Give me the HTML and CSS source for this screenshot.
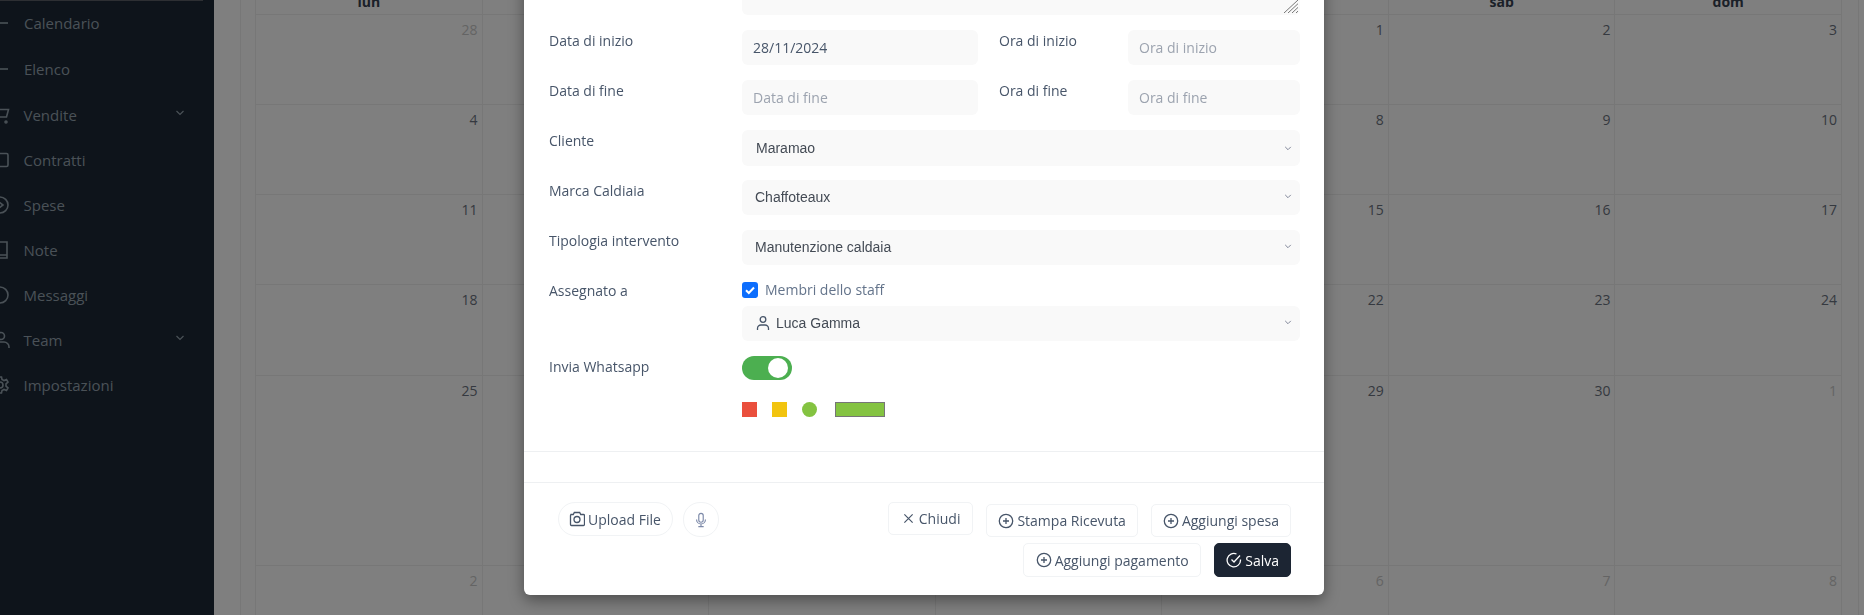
FILE: index.html
```html
<!DOCTYPE html>
<html lang="it">
<head>
<meta charset="utf-8">
<title>Calendario</title>
<link rel="stylesheet" href="styles.css">
</head>
<body>
<div class="app">
  <aside class="sidebar">
    <div class="side-rule"></div>
    <nav class="nav">
      <a class="nav-item tall"><span class="dash"></span><span class="nav-label">Calendario</span></a>
      <a class="nav-item tall"><span class="dash"></span><span class="nav-label">Elenco</span></a>
      <a class="nav-item lift"><svg class="nav-icon" viewBox="0 0 20 20"><circle cx="5" cy="17" r="1"/><circle cx="15" cy="17" r="1"/><path d="M1 2h3l2 10h9.500l2-7.500H5"/></svg><span class="nav-label">Vendite</span><svg class="nav-chev" viewBox="0 0 10 6"><path d="M1.500 1 5 4.500 8.500 1"/></svg></a>
      <a class="nav-item"><svg class="nav-icon" viewBox="0 0 20 20"><rect x="3" y="3.500" width="14" height="13" rx="1.500"/></svg><span class="nav-label">Contratti</span></a>
      <a class="nav-item"><svg class="nav-icon" viewBox="0 0 20 20"><circle cx="9" cy="10" r="8"/><path d="M8 7l4 3-4 3z"/></svg><span class="nav-label">Spese</span></a>
      <a class="nav-item"><svg class="nav-icon" viewBox="0 0 20 20"><path d="M3 2h13v13H3M16 15v3H3M3 15h13"/></svg><span class="nav-label">Note</span></a>
      <a class="nav-item"><svg class="nav-icon" viewBox="0 0 20 20"><circle cx="9" cy="10" r="8"/></svg><span class="nav-label">Messaggi</span></a>
      <a class="nav-item"><svg class="nav-icon" viewBox="0 0 20 20"><circle cx="10" cy="6" r="3.500"/><path d="M2 18v-2a5 5 0 0 1 5-4h6a5 5 0 0 1 5 5v1"/></svg><span class="nav-label">Team</span><svg class="nav-chev" viewBox="0 0 10 6"><path d="M1.500 1 5 4.500 8.500 1"/></svg></a>
      <a class="nav-item"><svg class="nav-icon" viewBox="0 0 20 20"><circle cx="9" cy="10" r="3"/><path d="M7.500 2h3l.5 2.500 2 1 2.500-1 1.500 2.500-2 1.800v2.400l2 1.800-1.500 2.500-2.500-1-2 1-.5 2.500h-3l-.5-2.500-2-1-2.500 1L1 13l2-1.800V8.800L1 7l1.500-2.500 2.500 1 2-1z"/></svg><span class="nav-label">Impostazioni</span></a>
    </nav>
  </aside>

  <main class="main">
    <section class="card">
      <div class="calendar">
        <div class="head">lun</div><div class="head">mar</div><div class="head">mer</div><div class="head">gio</div><div class="head">ven</div><div class="head">sab</div><div class="head">dom</div>

        <div class="day off">28</div><div class="day off">29</div><div class="day off">30</div><div class="day off">31</div><div class="day">1</div><div class="day">2</div><div class="day">3</div>
        <div class="day">4</div><div class="day">5</div><div class="day">6</div><div class="day">7</div><div class="day">8</div><div class="day">9</div><div class="day">10</div>
        <div class="day">11</div><div class="day">12</div><div class="day">13</div><div class="day">14</div><div class="day">15</div><div class="day">16</div><div class="day">17</div>
        <div class="day">18</div><div class="day">19</div><div class="day">20</div><div class="day">21</div><div class="day">22</div><div class="day">23</div><div class="day">24</div>
        <div class="day">25</div><div class="day">26</div><div class="day">27</div><div class="day">28</div><div class="day">29</div><div class="day">30</div><div class="day off">1</div>
        <div class="day off">2</div><div class="day off">3</div><div class="day off">4</div><div class="day off">5</div><div class="day off">6</div><div class="day off">7</div><div class="day off">8</div>
      </div>
    </section>
  </main>
</div>

<div class="overlay"></div>

<div class="modal">
  <div class="modal-body">
    <div class="row note-row">
      <span class="label"></span>
      <div class="note-wrap">
        <textarea class="field note"></textarea>
        <svg class="grip" viewBox="0 0 14 13"><path d="M0 13 14 0M4 13 14 3.700M8 13l6-5.600M12 13l2-1.900"/></svg>
      </div>
    </div>

    <div class="row">
      <label class="label">Data di inizio</label>
      <input class="field date" type="text" value="28/11/2024">
      <label class="label inline">Ora di inizio</label>
      <input class="field time" type="text" placeholder="Ora di inizio">
    </div>
    <div class="row">
      <label class="label">Data di fine</label>
      <input class="field date" type="text" placeholder="Data di fine">
      <label class="label inline">Ora di fine</label>
      <input class="field time" type="text" placeholder="Ora di fine">
    </div>

    <div class="row">
      <label class="label">Cliente</label>
      <div class="select first"><span>Maramao</span><svg class="chev" viewBox="0 0 10 6"><path d="M1.500 1 5 4.500 8.500 1"/></svg></div>
    </div>
    <div class="row">
      <label class="label">Marca Caldiaia</label>
      <div class="select"><span>Chaffoteaux</span><svg class="chev" viewBox="0 0 10 6"><path d="M1.500 1 5 4.500 8.500 1"/></svg></div>
    </div>
    <div class="row">
      <label class="label">Tipologia intervento</label>
      <div class="select"><span>Manutenzione caldaia</span><svg class="chev" viewBox="0 0 10 6"><path d="M1.500 1 5 4.500 8.500 1"/></svg></div>
    </div>

    <div class="row assign">
      <label class="label">Assegnato a</label>
      <div class="assign-col">
        <div class="check-line">
          <span class="checkbox"><svg viewBox="0 0 16 16"><path d="M4 8.300 6.800 11 12 5.500"/></svg></span>
          <span class="check-text">Membri dello staff</span>
        </div>
        <div class="select staff">
          <svg class="person" viewBox="0 0 16 16"><circle cx="8" cy="4.500" r="2.800"/><path d="M2.500 15v-1.500A3.500 3.500 0 0 1 6 10h4a3.500 3.500 0 0 1 3.500 3.500V15"/></svg>
          <span>Luca Gamma</span>
          <svg class="chev" viewBox="0 0 10 6"><path d="M1.500 1 5 4.500 8.500 1"/></svg>
        </div>
      </div>
    </div>

    <div class="row wa">
      <label class="label">Invia Whatsapp</label>
      <span class="toggle"><span class="knob"></span></span>
    </div>

    <div class="row swatches">
      <span class="label"></span>
      <div class="swatch-list">
        <span class="swatch red"></span>
        <span class="swatch yellow"></span>
        <span class="swatch green round"></span>
        <span class="color-bar"></span>
      </div>
    </div>
  </div>

  <div class="spacer"></div>

  <div class="modal-foot">
    <div class="foot-left">
      <button class="pill"><svg class="ic cam" viewBox="1 2 16 15"><path d="M2.500 5h2.800l1-2h5.400l1 2h2.800a1 1 0 0 1 1 1v9a1 1 0 0 1-1 1h-12a1 1 0 0 1-1-1V6a1 1 0 0 1 1-1z"/><circle cx="9" cy="10" r="3"/></svg>Upload File</button>
      <button class="pill mic"><svg class="ic" viewBox="0 0 18 18"><rect x="6.500" y="1.500" width="5" height="10" rx="2.500"/><path d="M4 8.500a5 5 0 0 0 10 0M9 13.500v3M6 16.500h6"/></svg></button>
    </div>
    <div class="foot-right">
      <div class="btn-row top">
        <button class="btn close"><svg class="ic x" viewBox="0 0 12 12"><path d="M1.500 1.500l9 9M10.500 1.500l-9 9"/></svg>Chiudi</button>
        <button class="btn low"><svg class="ic" viewBox="0 0 16 16"><circle cx="8" cy="8" r="6.700"/><path d="M8 5v6M5 8h6"/></svg>Stampa Ricevuta</button>
        <button class="btn low"><svg class="ic" viewBox="0 0 16 16"><circle cx="8" cy="8" r="6.700"/><path d="M8 5v6M5 8h6"/></svg>Aggiungi spesa</button>
      </div>
      <div class="btn-row">
        <button class="btn tall-btn pay"><svg class="ic" viewBox="0 0 16 16"><circle cx="8" cy="8" r="6.700"/><path d="M8 5v6M5 8h6"/></svg>Aggiungi pagamento</button>
        <button class="btn tall-btn save"><svg class="ic" viewBox="0 0 16 16"><path d="M14.500 7.500V8A6.700 6.700 0 1 1 10.500 2"/><path d="M5.500 7.500 8 10l6-6.500"/></svg>Salva</button>
      </div>
    </div>
  </div>
</div>
</body>
</html>
```

FILE: styles.css
```css
* { box-sizing: border-box; }

html, body {
  margin: 0;
  height: 100%;
  overflow: hidden;
}

body {
  font-family: "Open Sans", sans-serif;
  font-size: 14px;
  color: #475569;
  background: #fff;
}

.app {
  display: flex;
  height: 615px;
  overflow: hidden;
}

/* sidebar */
.sidebar {
  width: 214px;
  flex: none;
  background: #1c2836;
  overflow: hidden;
}

.side-rule {
  width: 203px;
  height: 1px;
  background: #5a5f66;
}

.nav {
  margin-left: -9px;
  margin-top: -1px;
}

.nav-item {
  display: flex;
  align-items: center;
  height: 45px;
  color: #94a3ae;
  font-size: 15px;
}

.nav-item.tall {
  height: 46px;
}

.nav-item.lift {
  padding-top: 1px;
}

.nav-icon {
  width: 20px;
  height: 20px;
  flex: none;
  fill: none;
  stroke: #94a3ae;
  stroke-width: 1.6;
  margin-right: 12.500px;
}

.dash {
  width: 17px;
  height: 2px;
  flex: none;
  margin-right: 16px;
  background: #94a3ae;
  opacity: .8;
}

.nav-chev {
  width: 10px;
  height: 6px;
  margin-left: auto;
  margin-right: 29px;
  margin-top: -4px;
  fill: none;
  stroke: #94a3ae;
  stroke-width: 1.200;
}

/* calendar */
.main {
  display: flex;
  flex: 1;
  padding-left: 26px;
  padding-right: 5px;
}

.card {
  flex: 1;
  border-left: 1px solid #eee;
  border-right: 1px solid #eee;
  padding: 0 16px 0 14px;
}

.calendar {
  display: grid;
  grid-template-columns: repeat(7, 1fr);
  grid-template-rows: 40px 90px 90px 90px 91px 190px 90px;
  margin-top: -25px;
  border-left: 1px solid #eee;
}

.head {
  border-right: 1px solid #eee;
  border-bottom: 1px solid #eee;
  text-align: center;
  font-weight: 700;
  color: #374151;
  padding-top: 17px;
  line-height: 20px;
}

.day {
  border-right: 1px solid #eee;
  border-bottom: 1px solid #eee;
  text-align: right;
  padding: 5px 4px 0 0;
  line-height: 20px;
  color: #6b7280;
}

.day.off {
  color: #c8c8c8;
}

/* overlay + modal */
.overlay {
  position: fixed;
  inset: 0;
  background: rgba(0, 0, 0, .5);
}

.modal {
  position: fixed;
  left: 524px;
  bottom: 20px;
  width: 800px;
  background: #fff;
  border-radius: 6px;
  box-shadow: 0 5px 15px rgba(0, 0, 0, .4);
}

.modal-body {
  padding: 0 24px 0 25px;
}

.row {
  display: flex;
  align-items: flex-start;
  margin-top: 15px;
}

.note-row {
  margin-top: 0;
}

.label {
  width: 193px;
  flex: none;
  padding-top: 1px;
  line-height: 20px;
  color: #475569;
}

.label.inline {
  width: 150px;
  padding-left: 21px;
}

.field {
  display: block;
  height: 35px;
  border: 0;
  border-radius: 6px;
  background: #f9f9f9;
  font: inherit;
  color: #475569;
  padding: 0 11px;
  outline: 0;
}

.field::placeholder {
  color: #9ca3af;
}

.note-wrap {
  flex: 1;
  position: relative;
}

.note {
  width: 100%;
  height: 60px;
  resize: none;
}

.grip {
  position: absolute;
  right: 2px;
  bottom: 2px;
  width: 14px;
  height: 13px;
  fill: none;
  stroke: #777;
  stroke-width: 1;
}

.date {
  width: 236px;
}

.time {
  width: 172px;
}

.select {
  display: flex;
  align-items: center;
  flex: 1;
  height: 35px;
  padding: 0 8px 2px 13px;
  border-radius: 6px;
  background: #f9f9f9;
  font-family: "Liberation Sans", sans-serif;
  font-size: 14px;
  color: #444b55;
}

.select.first {
  height: 36px;
  padding: 0 8px 0 14px;
  margin-bottom: -1px;
}

.chev {
  width: 8px;
  height: 5px;
  margin-left: auto;
  fill: none;
  stroke: #7b8194;
  stroke-width: 1.200;
}

.assign {
  margin-top: 17px;
}

.assign .label {
  padding-top: 0;
  margin-top: -1px;
}

.assign-col {
  flex: 1;
}

.check-line {
  display: flex;
  align-items: center;
  height: 16px;
  margin-bottom: 8px;
}

.checkbox {
  width: 16px;
  height: 16px;
  border-radius: 3px;
  background: #0d6efd;
  margin-right: 7px;
  display: block;
}

.checkbox svg {
  display: block;
  fill: none;
  stroke: #fff;
  stroke-width: 2;
}

.check-text {
  line-height: 20px;
  color: #64748b;
}

.person {
  width: 16px;
  height: 16px;
  margin-right: 5px;
  fill: none;
  stroke: #475569;
  stroke-width: 1.300;
}

.toggle {
  display: flex;
  justify-content: flex-end;
  align-items: center;
  width: 50px;
  height: 24px;
  padding-right: 4px;
  border-radius: 12px;
  background: #4caf50;
}

.knob {
  width: 20px;
  height: 20px;
  border-radius: 50%;
  background: #fff;
}

.swatches {
  margin-top: 22px;
}

.swatch-list {
  display: flex;
  align-items: center;
}

.swatch {
  width: 15px;
  height: 15px;
  margin-right: 15px;
}

.red { background: #ea4f3d; }
.yellow { background: #f2c40f; }
.green { background: #84c341; }
.round { border-radius: 50%; margin-right: 18px; }

.color-bar {
  width: 50px;
  height: 15px;
  background: #84c341;
  border: 1px solid #767676;
}

.spacer {
  height: 32px;
  margin-top: 34px;
  border-top: 1px solid #eef0f2;
  border-bottom: 1px solid #eef0f2;
}

.modal-foot {
  display: flex;
  justify-content: space-between;
  align-items: flex-start;
  padding: 19px 33px 18px 34px;
}

.foot-left {
  display: flex;
  gap: 10px;
}

.foot-right {
  display: flex;
  flex-direction: column;
  align-items: flex-end;
  gap: 6px;
}

.btn-row {
  display: flex;
  align-items: flex-start;
  gap: 13.500px;
}

.btn-row.top {
  gap: 13px;
}

button {
  font: inherit;
  color: #475569;
  background: #fff;
  cursor: pointer;
}

.pill {
  display: flex;
  align-items: center;
  height: 34px;
  padding: 0 11px 0 10px;
  border: 1px solid #f1f3f5;
  border-radius: 17px;
}

.pill.mic {
  width: 36px;
  height: 35px;
  padding: 0;
  justify-content: center;
}

.ic {
  width: 16px;
  height: 16px;
  margin-right: 3px;
  fill: none;
  stroke: #475569;
  stroke-width: 1.300;
}

.mic .ic {
  margin: 0;
  stroke: #7c89a8;
}

.btn {
  display: flex;
  align-items: center;
  height: 33px;
  padding: 0 11px;
  border: 1px solid #f1f3f5;
  border-radius: 5px;
}

.btn.low {
  margin-top: 2px;
}

.btn.close {
  padding: 0 12px 0 14px;
}

.btn.pay {
  padding-left: 12px;
}

.btn .x {
  width: 11px;
  height: 11px;
  margin-right: 5px;
}

.btn.tall-btn {
  height: 34px;
}

.btn.save {
  background: #1c2533;
  border-color: #1c2533;
  color: #fff;
}

.save .ic {
  stroke: #fff;
}
```
